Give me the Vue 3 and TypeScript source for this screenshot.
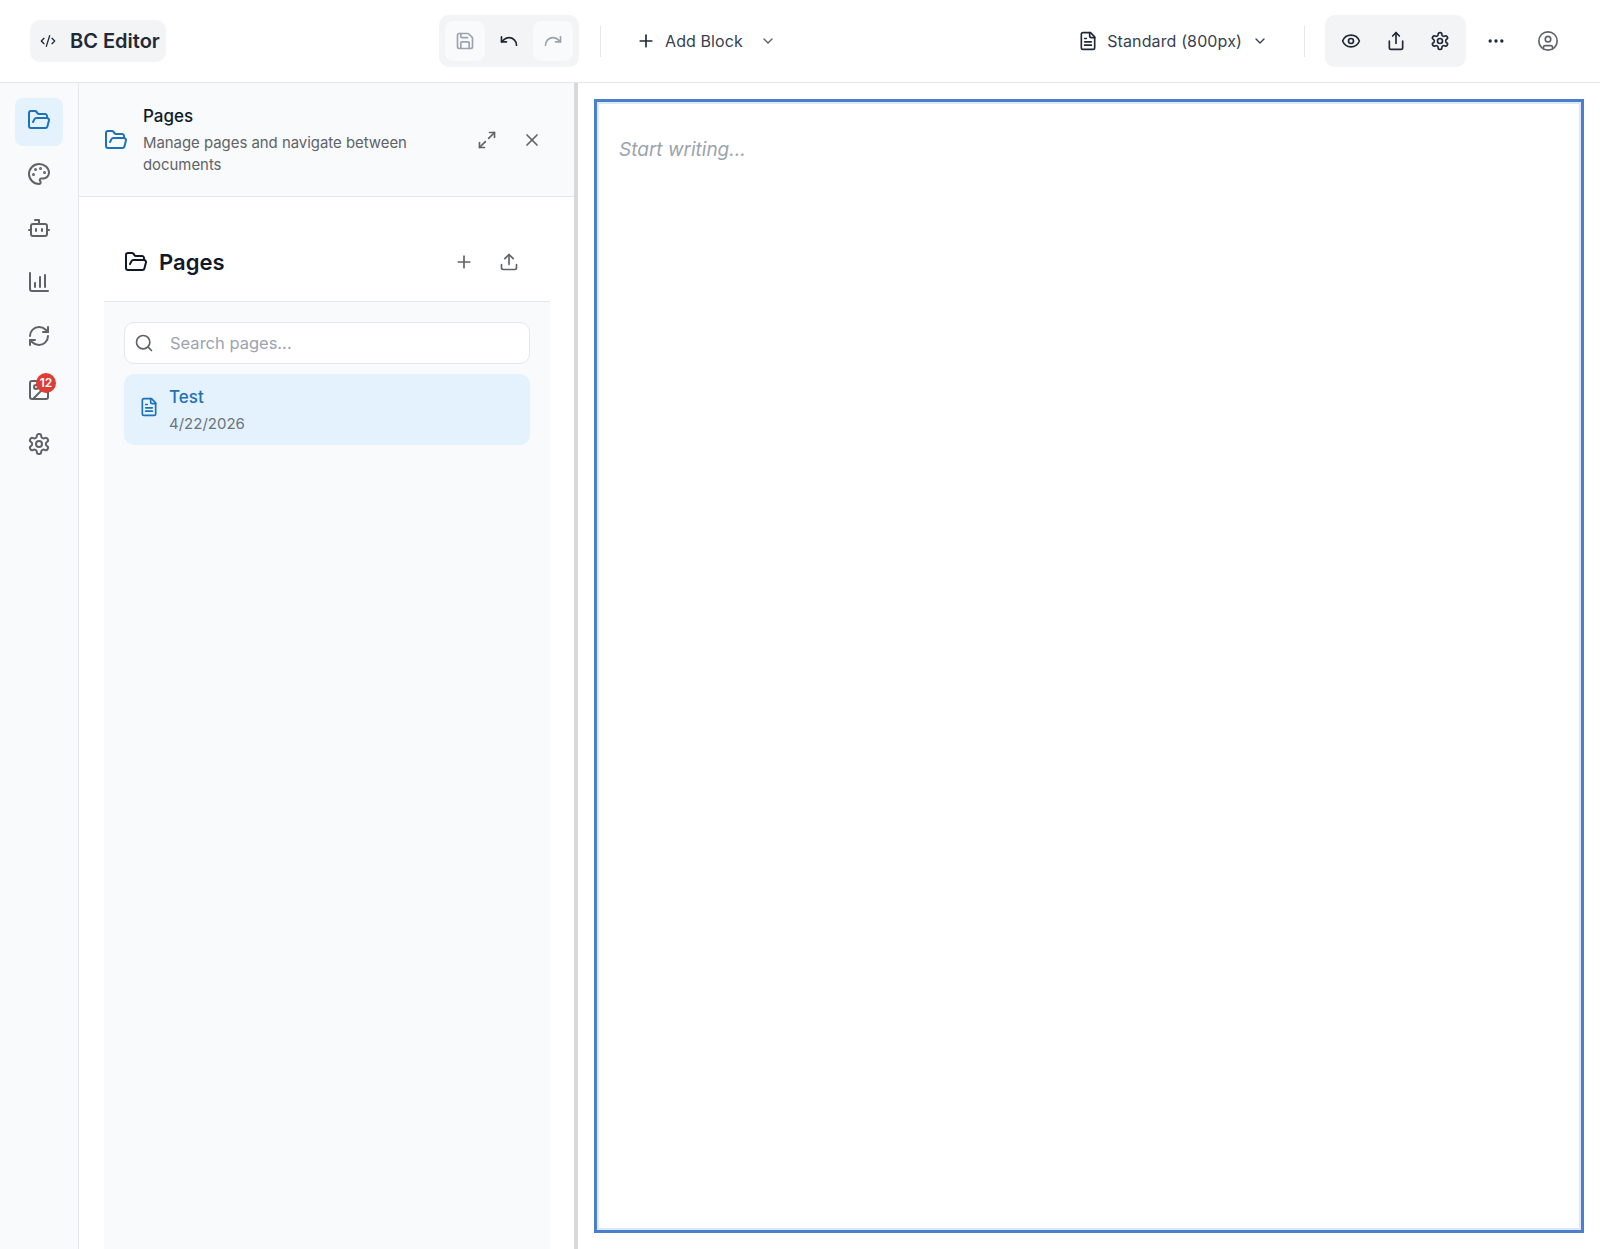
<script setup lang="ts">
import { ref } from 'vue'

// lucide-style icon bodies, stroke comes from .ic
const icons: Record<string, string> = {
  code: '<path d="m18 16 4-4-4-4"/><path d="m6 8-4 4 4 4"/><path d="m14.5 4-5 16"/>',
  save: '<path d="M15.2 3a2 2 0 0 1 1.4.6l3.8 3.8a2 2 0 0 1 .6 1.4V19a2 2 0 0 1-2 2H5a2 2 0 0 1-2-2V5a2 2 0 0 1 2-2z"/><path d="M17 21v-7a1 1 0 0 0-1-1H8a1 1 0 0 0-1 1v7"/><path d="M7 3v4a1 1 0 0 0 1 1h7"/>',
  undo: '<path d="M3 7v6h6"/><path d="M21 17a9 9 0 0 0-9-9 9 9 0 0 0-6 2.3L3 13"/>',
  redo: '<path d="M21 7v6h-6"/><path d="M3 17a9 9 0 0 1 9-9 9 9 0 0 1 6 2.3l3 2.7"/>',
  plus: '<path d="M5 12h14"/><path d="M12 5v14"/>',
  chevron: '<path d="m6 9 6 6 6-6"/>',
  file: '<path d="M15 2H6a2 2 0 0 0-2 2v16a2 2 0 0 0 2 2h12a2 2 0 0 0 2-2V7Z"/><path d="M14 2v4a2 2 0 0 0 2 2h4"/><path d="M10 9H8"/><path d="M16 13H8"/><path d="M16 17H8"/>',
  eye: '<path d="M2.062 12.348a1 1 0 0 1 0-.696 10.75 10.75 0 0 1 19.876 0 1 1 0 0 1 0 .696 10.75 10.75 0 0 1-19.876 0"/><circle cx="12" cy="12" r="3"/>',
  share: '<path d="M4 12v8a2 2 0 0 0 2 2h12a2 2 0 0 0 2-2v-8"/><path d="m16 6-4-4-4 4"/><path d="M12 2v13"/>',
  settings: '<path d="M12.22 2h-.44a2 2 0 0 0-2 2v.18a2 2 0 0 1-1 1.73l-.43.25a2 2 0 0 1-2 0l-.15-.08a2 2 0 0 0-2.73.73l-.22.38a2 2 0 0 0 .73 2.73l.15.1a2 2 0 0 1 1 1.72v.51a2 2 0 0 1-1 1.74l-.15.09a2 2 0 0 0-.73 2.73l.22.38a2 2 0 0 0 2.73.73l.15-.08a2 2 0 0 1 2 0l.43.25a2 2 0 0 1 1 1.73V20a2 2 0 0 0 2 2h.44a2 2 0 0 0 2-2v-.18a2 2 0 0 1 1-1.73l.43-.25a2 2 0 0 1 2 0l.15.08a2 2 0 0 0 2.73-.73l.22-.39a2 2 0 0 0-.73-2.73l-.15-.08a2 2 0 0 1-1-1.74v-.5a2 2 0 0 1 1-1.74l.15-.09a2 2 0 0 0 .73-2.73l-.22-.38a2 2 0 0 0-2.73-.73l-.15.08a2 2 0 0 1-2 0l-.43-.25a2 2 0 0 1-1-1.73V4a2 2 0 0 0-2-2z"/><circle cx="12" cy="12" r="3"/>',
  more: '<circle cx="12" cy="12" r="1"/><circle cx="19" cy="12" r="1"/><circle cx="5" cy="12" r="1"/>',
  user: '<circle cx="12" cy="12" r="10"/><circle cx="12" cy="10" r="3"/><path d="M7 20.662V19a2 2 0 0 1 2-2h6a2 2 0 0 1 2 2v1.662"/>',
  folder: '<path d="m6 14 1.5-2.9A2 2 0 0 1 9.24 10H20a2 2 0 0 1 1.94 2.5l-1.54 6a2 2 0 0 1-1.95 1.5H4a2 2 0 0 1-2-2V5a2 2 0 0 1 2-2h3.9a2 2 0 0 1 1.69.9l.81 1.2a2 2 0 0 0 1.67.9H18a2 2 0 0 1 2 2v2"/>',
  palette: '<circle cx="13.5" cy="6.5" r=".5" fill="currentColor"/><circle cx="17.5" cy="10.5" r=".5" fill="currentColor"/><circle cx="8.5" cy="7.5" r=".5" fill="currentColor"/><circle cx="6.5" cy="12.5" r=".5" fill="currentColor"/><path d="M12 2C6.5 2 2 6.5 2 12s4.5 10 10 10c.926 0 1.648-.746 1.648-1.688 0-.437-.18-.835-.437-1.125-.29-.289-.438-.652-.438-1.125a1.64 1.64 0 0 1 1.668-1.668h1.996c3.051 0 5.555-2.503 5.555-5.554C21.965 6.012 17.461 2 12 2z"/>',
  bot: '<path d="M12 8V4H8"/><rect width="16" height="12" x="4" y="8" rx="2"/><path d="M2 14h2"/><path d="M20 14h2"/><path d="M15 13v2"/><path d="M9 13v2"/>',
  chart: '<path d="M3 3v16a2 2 0 0 0 2 2h16"/><path d="M8 17v-4"/><path d="M13 17V7"/><path d="M18 17V5"/>',
  refresh: '<path d="M3 12a9 9 0 0 1 9-9 9.75 9.75 0 0 1 6.74 2.74L21 8"/><path d="M21 3v5h-5"/><path d="M21 12a9 9 0 0 1-9 9 9.75 9.75 0 0 1-6.74-2.74L3 16"/><path d="M8 16H3v5"/>',
  image: '<rect width="18" height="18" x="3" y="3" rx="2"/><circle cx="9" cy="9" r="2"/><path d="m21 15-3.086-3.086a2 2 0 0 0-2.828 0L6 21"/>',
  expand: '<path d="M15 3h6v6"/><path d="m21 3-7 7"/><path d="m3 21 7-7"/><path d="M9 21H3v-6"/>',
  close: '<path d="M18 6 6 18"/><path d="m6 6 12 12"/>',
  upload: '<path d="M21 15v4a2 2 0 0 1-2 2H5a2 2 0 0 1-2-2v-4"/><path d="m17 8-5-5-5 5"/><path d="M12 3v12"/>',
  search: '<path d="m21 21-4.34-4.34"/><circle cx="11" cy="11" r="8"/>',
}

const railItems = [
  { icon: 'folder', active: true },
  { icon: 'palette' },
  { icon: 'bot' },
  { icon: 'chart' },
  { icon: 'refresh' },
  { icon: 'image', badge: 12 },
  { icon: 'settings' },
]

const search = ref('')
</script>

<template>
  <div class="app">
    <header class="topbar">
      <div class="logo">
        <svg class="ic logo-ic" viewBox="0 0 24 24" v-html="icons.code"></svg>
        <span>BC Editor</span>
      </div>

      <div class="group history">
        <button class="tool faded"><svg class="ic muted" viewBox="0 0 24 24" v-html="icons.save"></svg></button>
        <button class="tool"><svg class="ic" viewBox="0 0 24 24" v-html="icons.undo"></svg></button>
        <button class="tool faded"><svg class="ic muted" viewBox="0 0 24 24" v-html="icons.redo"></svg></button>
      </div>
      <div class="vline first"></div>
      <button class="add-block">
        <svg class="ic" viewBox="0 0 24 24" v-html="icons.plus"></svg>
        <span>Add Block</span>
        <svg class="ic small grey" viewBox="0 0 24 24" v-html="icons.chevron"></svg>
      </button>

      <button class="width-select">
        <svg class="ic" viewBox="0 0 24 24" v-html="icons.file"></svg>
        <span>Standard (800px)</span>
        <svg class="ic small" viewBox="0 0 24 24" v-html="icons.chevron"></svg>
      </button>
      <div class="vline second"></div>
      <div class="group actions">
        <button class="tool"><svg class="ic" viewBox="0 0 24 24" v-html="icons.eye"></svg></button>
        <button class="tool"><svg class="ic" viewBox="0 0 24 24" v-html="icons.share"></svg></button>
        <button class="tool"><svg class="ic" viewBox="0 0 24 24" v-html="icons.settings"></svg></button>
      </div>
      <button class="tool more"><svg class="ic" viewBox="0 0 24 24" v-html="icons.more"></svg></button>
      <button class="tool account"><svg class="ic grey" viewBox="0 0 24 24" v-html="icons.user"></svg></button>
    </header>

    <div class="body">
      <nav class="rail">
        <button v-for="item in railItems" :key="item.icon" class="rail-btn" :class="{ active: item.active }">
          <svg class="ic" viewBox="0 0 24 24" v-html="icons[item.icon]"></svg>
          <span v-if="item.badge" class="badge">{{ item.badge }}</span>
        </button>
      </nav>

      <aside class="panel">
        <div class="panel-head">
          <svg class="ic head-ic" viewBox="0 0 24 24" v-html="icons.folder"></svg>
          <div class="head-text">
            <div class="head-title">Pages</div>
            <div class="head-desc">Manage pages and navigate between documents</div>
          </div>
          <button class="icon-btn"><svg class="ic grey" viewBox="0 0 24 24" v-html="icons.expand"></svg></button>
          <button class="icon-btn"><svg class="ic grey" viewBox="0 0 24 24" v-html="icons.close"></svg></button>
        </div>

        <div class="panel-body">
          <div class="pages-head">
            <svg class="ic pages-ic" viewBox="0 0 24 24" v-html="icons.folder"></svg>
            <h2>Pages</h2>
            <button class="icon-btn push"><svg class="ic grey" viewBox="0 0 24 24" v-html="icons.plus"></svg></button>
            <button class="icon-btn"><svg class="ic grey" viewBox="0 0 24 24" v-html="icons.upload"></svg></button>
          </div>
          <div class="pages-list">
            <label class="search">
              <svg class="ic grey" viewBox="0 0 24 24" v-html="icons.search"></svg>
              <input v-model="search" placeholder="Search pages..." />
            </label>
            <div class="page-item">
              <svg class="ic page-ic" viewBox="0 0 24 24" v-html="icons.file"></svg>
              <div class="page-text">
                <div class="page-name">Test</div>
                <div class="page-date">4/22/2026</div>
              </div>
            </div>
          </div>
        </div>
      </aside>

      <div class="splitter"></div>

      <main class="canvas">
        <div class="doc">
          <div class="doc-placeholder">Start writing...</div>
        </div>
      </main>
    </div>
  </div>
</template>

<style>
html,
body {
  margin: 0;
  height: 100%;
  overflow: hidden;
  background: #fff;
}
</style>

<style scoped>
.app {
  height: 1249px;
  display: flex;
  flex-direction: column;
  font-family: Inter, "Liberation Sans", sans-serif;
  color: #1f2937;
}

button {
  border: none;
  background: none;
  padding: 0;
  font: inherit;
  color: inherit;
  display: flex;
  align-items: center;
  justify-content: center;
}

.ic {
  width: 20px;
  height: 20px;
  flex: none;
  fill: none;
  stroke: currentColor;
  stroke-width: 2;
  stroke-linecap: round;
  stroke-linejoin: round;
}

.ic.small {
  width: 16px;
  height: 16px;
}

.ic.grey {
  color: #5f6368;
}

.ic.muted {
  color: #9ca3af;
}

.topbar {
  height: 82px;
  flex: none;
  display: flex;
  align-items: center;
  padding: 0 32px 0 30px;
  border-bottom: 1px solid #e5e7eb;
  background: #fff;
}

.logo {
  width: 136px;
  height: 42px;
  box-sizing: border-box;
  padding-left: 10px;
  display: flex;
  align-items: center;
  gap: 14px;
  background: #f3f4f6;
  border-radius: 10px;
  font-size: 20px;
  font-weight: 600;
  white-space: nowrap;
}

.logo-ic {
  width: 16px;
  height: 16px;
}

.group {
  display: flex;
  align-items: center;
  gap: 4px;
  height: 52px;
  padding: 0 6px;
  box-sizing: border-box;
  background: #f3f4f6;
  border-radius: 10px;
}

.history {
  margin-left: 273px;
}

.tool {
  width: 40px;
  height: 40px;
  border-radius: 8px;
}

.tool.faded {
  background: #f9fafb;
}

.vline {
  width: 1px;
  height: 31px;
  background: #e5e7eb;
}

.vline.first {
  margin-left: 21px;
}

.add-block {
  margin-left: 35px;
  display: flex;
  gap: 9px;
  font-size: 16px;
  letter-spacing: 0.1px;
  color: #374151;
  white-space: nowrap;
}

.add-block .ic:first-child {
  color: #1f2937;
}

.add-block .small {
  margin-left: 8px;
}

.width-select {
  margin-left: auto;
  display: flex;
  gap: 9px;
  font-size: 16px;
  letter-spacing: 0.13px;
  color: #374151;
  white-space: nowrap;
}

.width-select .small {
  margin-left: 1px;
}

.width-select .ic:first-child {
  color: #1f2937;
}

.vline.second {
  margin-left: 36px;
}

.actions {
  margin-left: 20px;
  width: 141px;
  gap: 5px;
  justify-content: center;
}

.more {
  margin-left: 10px;
}

.account {
  margin-left: 12px;
}

.account .ic {
  width: 22px;
  height: 22px;
  stroke-width: 1.8;
}

.body {
  flex: 1;
  min-height: 0;
  display: flex;
}

.rail {
  width: 79px;
  flex: none;
  box-sizing: border-box;
  padding-top: 15px;
  display: flex;
  flex-direction: column;
  align-items: center;
  gap: 6px;
  background: #f8fafc;
  border-right: 1px solid #e5e7eb;
}

.rail-btn {
  position: relative;
  width: 48px;
  height: 48px;
  border-radius: 8px;
  color: #5f6368;
}

.rail-btn .ic {
  width: 24px;
  height: 24px;
  margin-top: -4px;
}

.rail-btn.active {
  background: #e3f2fd;
  color: #1f71b8;
}

.badge {
  position: absolute;
  top: 5px;
  right: 7px;
  width: 20px;
  height: 20px;
  border-radius: 50%;
  background: #dc3d35;
  color: #fff;
  font-size: 12px;
  font-weight: 600;
  line-height: 20px;
  text-align: center;
}

.panel {
  width: 495px;
  flex: none;
  display: flex;
  flex-direction: column;
  background: #fff;
}

.panel-head {
  height: 114px;
  box-sizing: border-box;
  padding: 0 24px 0 25px;
  display: flex;
  align-items: center;
  background: #f8fafc;
  border-bottom: 1px solid #e5e7eb;
}

.head-ic {
  width: 24px;
  height: 24px;
  color: #1f71b8;
}

.head-text {
  flex: 1;
  margin-left: 15px;
  margin-right: 40px;
}

.head-title {
  font-size: 17px;
  font-weight: 500;
  line-height: 24px;
  margin-bottom: 4px;
  color: #111827;
}

.head-desc {
  font-size: 14.9px;
  line-height: 22px;
  color: #5f6368;
}

.icon-btn {
  width: 36px;
  height: 36px;
  margin-left: 9px;
  flex: none;
}

.panel-body {
  flex: 1;
  min-height: 0;
  padding: 0 24px 0 25px;
  display: flex;
  flex-direction: column;
}

.pages-head {
  height: 105px;
  box-sizing: border-box;
  padding: 25px 23px 0 20px;
  display: flex;
  align-items: center;
  border-bottom: 1px solid #e5e7eb;
}

.pages-ic {
  width: 24px;
  height: 24px;
  color: #111827;
}

.pages-head h2 {
  margin: 0 0 0 11px;
  font-size: 22px;
  font-weight: 600;
  color: #111827;
}

.push {
  margin-left: auto;
}

.pages-list {
  flex: 1;
  padding: 20px;
  background: #f8fafc;
}

.search {
  height: 42px;
  box-sizing: border-box;
  display: flex;
  align-items: center;
  padding: 0 9px;
  gap: 16px;
  background: #fff;
  border: 1px solid #e5e7eb;
  border-radius: 10px;
}

.search input {
  flex: 1;
  min-width: 0;
  border: none;
  outline: none;
  background: none;
  padding: 0;
  font: inherit;
  font-size: 16.5px;
}

.search input::placeholder {
  color: #9ca3af;
}

.page-item {
  margin-top: 10px;
  height: 71px;
  box-sizing: border-box;
  padding: 0 15px;
  display: flex;
  align-items: center;
  gap: 10px;
  background: #e3f2fd;
  border-radius: 10px;
  color: #1f71b8;
}

.page-ic {
  margin-top: -5px;
}

.page-text {
  padding-top: 4px;
}

.page-name {
  font-size: 17px;
  font-weight: 500;
  line-height: 26px;
  margin-top: -4px;
}

.page-date {
  font-size: 15px;
  line-height: 22px;
  margin-top: 3px;
  color: #6b7280;
}

.splitter {
  width: 4px;
  flex: none;
  background: #d8d9db;
}

.canvas {
  flex: 1;
  min-width: 0;
  padding: 16px;
  display: flex;
  background: #fff;
}

.doc {
  flex: 1;
  box-sizing: border-box;
  padding: 36px 22px;
  border: 3px solid #4a7ecf;
  box-shadow: inset 0 0 0 2px #dbe9fa;
}

.doc-placeholder {
  font-size: 19px;
  line-height: 24px;
  font-style: italic;
  color: #9ca3af;
}
</style>
